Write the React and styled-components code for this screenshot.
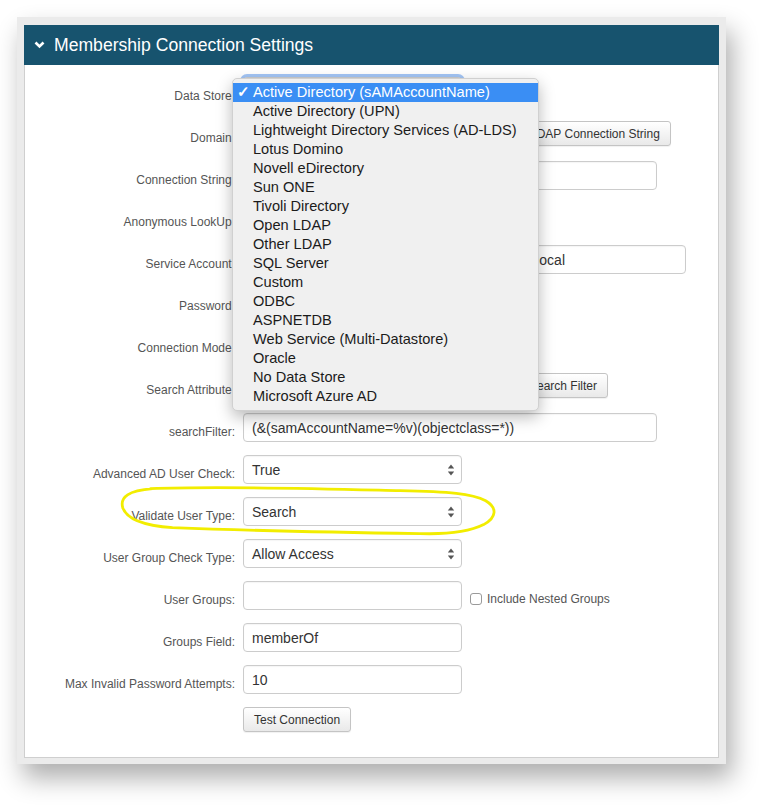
import React from "react";
import styled, { createGlobalStyle } from "styled-components";

const Global = createGlobalStyle`
  html, body { margin: 0; padding: 0; background: #fff; }
  body { font-family: "Liberation Sans", Arial, sans-serif; }
`;

const Page = styled.div`
  padding: 17px 0 0 17px;
  width: 774px;
  height: 812px;
  box-sizing: border-box;
`;

const Frame = styled.div`
  width: 709px;
  box-sizing: border-box;
  padding: 8px 7px 6px 7px;
  background: #ebebeb;
  box-shadow: 6px 14px 24px rgba(0, 0, 0, 0.32);
`;

const Panel = styled.section`
  position: relative;
  background: #fff;
  border: 1px solid #cfcfcf;
  border-top: none;
`;

const Header = styled.div`
  height: 40px;
  background: #17536e;
  display: flex;
  align-items: center;
  gap: 9px;
  padding-left: 10px;
  color: #fff;
  font-size: 17.6px;
  margin: 0 -1px;
`;

const Body = styled.div`
  display: grid;
  grid-template-columns: 210px 1fr;
  column-gap: 8px;
  row-gap: 13px;
  padding: 12px 0 25px 0;
`;

const Label = styled.label`
  font-size: 12px;
  line-height: 15px;
  color: #555;
  text-align: right;
  padding-top: 12px;
  white-space: nowrap;
`;

const Field = styled.div`
  position: relative;
  display: flex;
  align-items: ${(p) => (p.$top ? "flex-start" : "center")};
  gap: ${(p) => p.$gap || 0}px;
  min-height: ${(p) => (p.$top ? 25 : 29)}px;
`;

const Box = styled.div`
  box-sizing: border-box;
  width: ${(p) => p.$w}px;
  height: 29px;
  border: 1px solid #ccc;
  border-radius: 4px;
  background: #fff;
  display: flex;
  align-items: center;
  justify-content: space-between;
  padding: 0 6px 0 8px;
  font-size: 14px;
  color: #333;
  white-space: nowrap;
  overflow: hidden;
  box-shadow: ${(p) =>
    p.$focus ? "0 0 0 3px rgba(88, 150, 236, 0.55)" : "inset 0 1px 1px rgba(0,0,0,0.04)"};
`;

const Button = styled.button`
  box-sizing: border-box;
  height: 25px;
  padding: 0 10px;
  font-family: inherit;
  font-size: 12px;
  color: #333;
  background: linear-gradient(#ffffff, #e9e9e9);
  border: 1px solid #c4c4c4;
  border-radius: 3px;
  white-space: nowrap;
  box-shadow: 0 1px 1px rgba(0, 0, 0, 0.06);
`;

const Check = styled.input.attrs({ type: "checkbox" })`
  appearance: none;
  margin: 0;
  width: 12px;
  height: 12px;
  border: 1px solid #9a9a9a;
  border-radius: 3px;
  background: #fff;
`;

const CheckLabel = styled.span`
  display: flex;
  align-items: center;
  gap: 5px;
  font-size: 12px;
  color: #555;
  margin-left: 8px;
  margin-top: 6px;
`;

const Menu = styled.ul`
  position: absolute;
  left: -11px;
  top: 1px;
  z-index: 5;
  width: 307px;
  box-sizing: border-box;
  margin: 0;
  padding: 4px 0;
  list-style: none;
  background: #f0f0f0;
  border: 1px solid #d0d0d0;
  border-radius: 5px;
  box-shadow: 0 6px 16px rgba(0, 0, 0, 0.28);
`;

const Item = styled.li`
  height: 19px;
  line-height: 19px;
  display: flex;
  font-size: 14.6px;
  color: ${(p) => (p.$active ? "#fff" : "#1b1b1b")};
  background: ${(p) => (p.$active ? "#3a8ef4" : "transparent")};
  span {
    width: 19px;
    padding-left: 1px;
    text-align: center;
    flex: none;
    font-weight: bold;
  }
`;

const Annotation = styled.svg`
  position: absolute;
  left: 0;
  top: 0;
  width: 100%;
  height: 100%;
  pointer-events: none;
  z-index: 6;
`;

function Arrows() {
  return (
    <svg width="8" height="14" viewBox="0 0 8 14">
      <path d="M4 1.5 L7.2 5.6 L0.8 5.6 Z" fill="#555" />
      <path d="M4 12.5 L7.2 8.4 L0.8 8.4 Z" fill="#555" />
    </svg>
  );
}

function Select({ w = 219, value, focus }) {
  return (
    <Box $w={w} $focus={focus}>
      <span>{value}</span>
      <Arrows />
    </Box>
  );
}

const stores = [
  "Active Directory (sAMAccountName)",
  "Active Directory (UPN)",
  "Lightweight Directory Services (AD-LDS)",
  "Lotus Domino",
  "Novell eDirectory",
  "Sun ONE",
  "Tivoli Directory",
  "Open LDAP",
  "Other LDAP",
  "SQL Server",
  "Custom",
  "ODBC",
  "ASPNETDB",
  "Web Service (Multi-Datastore)",
  "Oracle",
  "No Data Store",
  "Microsoft Azure AD",
];

export default function App() {
  return (
    <Page>
      <Global />
      <Frame>
        <Panel>
          <Header>
            <svg width="11" height="8" viewBox="0 0 11 8">
              <path d="M1.5 1.5 L5.5 5.5 L9.5 1.5" stroke="#fff" strokeWidth="2.6" fill="none" />
            </svg>
            Membership Connection Settings
          </Header>
          <Body>
            <Label>Data Store:</Label>
            <Field>
              {/* the open list covers the select itself */}
              <Select focus />
              <Menu>
                {stores.map((s, i) => (
                  <Item key={s} $active={i === 0}>
                    <span>{i === 0 ? "✓" : ""}</span>
                    {s}
                  </Item>
                ))}
              </Menu>
            </Field>

            <Label>Domain:</Label>
            <Field $gap={6}>
              <Box $w={240} />
              <Button>Build LDAP Connection String</Button>
            </Field>

            <Label>Connection String:</Label>
            <Field>
              <Box $w={414} />
            </Field>

            <Label>Anonymous LookUp:</Label>
            <Field>
              <Check />
            </Field>

            <Label>Service Account:</Label>
            <Field>
              <Box $w={443}>membership_services@yourcompanydomain.local</Box>
            </Field>

            <Label>Password:</Label>
            <Field>
              <Box $w={219} />
            </Field>

            <Label>Connection Mode:</Label>
            <Field>
              <Select />
            </Field>

            <Label>Search Attribute:</Label>
            <Field $gap={6}>
              <Select w={239} />
              <Button>Build Search Filter</Button>
            </Field>

            <Label>searchFilter:</Label>
            <Field>
              <Box $w={414}>(&amp;(samAccountName=%v)(objectclass=*))</Box>
            </Field>

            <Label>Advanced AD User Check:</Label>
            <Field>
              <Select value="True" />
            </Field>

            <Label>Validate User Type:</Label>
            <Field>
              <Select value="Search" />
            </Field>

            <Label>User Group Check Type:</Label>
            <Field>
              <Select value="Allow Access" />
            </Field>

            <Label>User Groups:</Label>
            <Field>
              <Box $w={219} />
              <CheckLabel>
                <Check />
                Include Nested Groups
              </CheckLabel>
            </Field>

            <Label>Groups Field:</Label>
            <Field>
              <Box $w={219}>memberOf</Box>
            </Field>

            <Label>Max Invalid Password Attempts:</Label>
            <Field>
              <Box $w={219}>10</Box>
            </Field>

            <span />
            <Field $top>
              <Button>Test Connection</Button>
            </Field>
          </Body>
          <Annotation viewBox="0 0 695 732">
            <g transform="translate(-24,-25)">
              <path
                d="M150 489 C 220 486, 320 489, 400 491 C 450 492, 472 494, 486 501 C 498 508, 497 518, 484 525 C 470 532, 452 535, 420 534 C 350 533, 250 531, 172 528 C 142 526, 126 519, 122 508 C 119 497, 128 491, 152 489"
                fill="none"
                stroke="#f2ed00"
                strokeWidth="2.8"
                strokeLinecap="round"
              />
            </g>
          </Annotation>
        </Panel>
      </Frame>
    </Page>
  );
}
